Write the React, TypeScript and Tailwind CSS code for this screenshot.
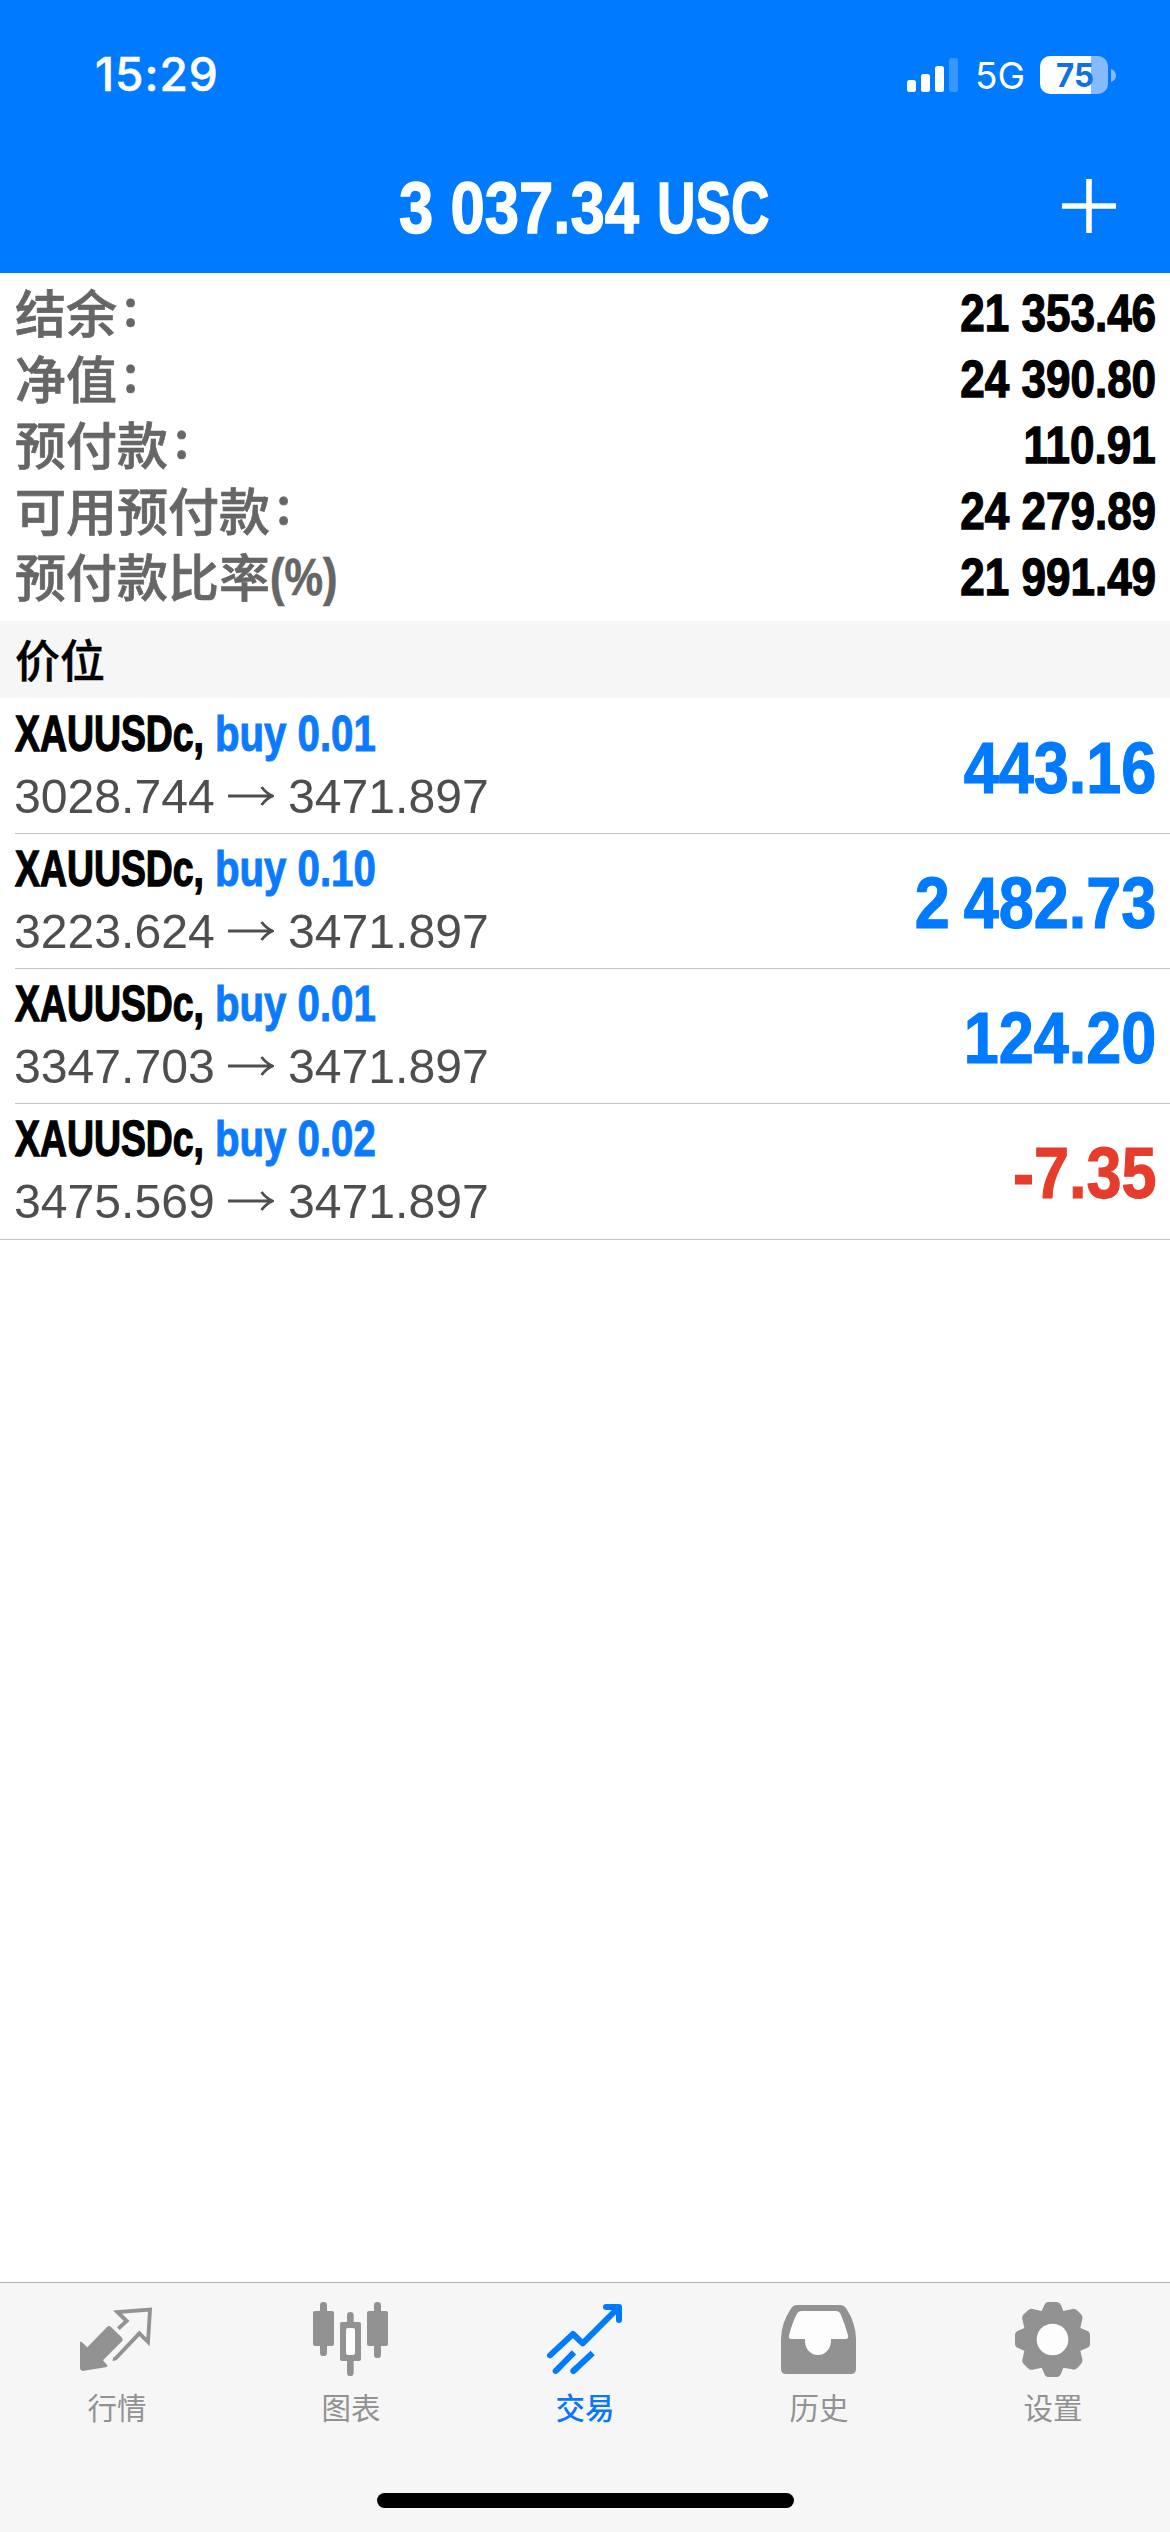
import type { ReactNode } from "react";

const summary = [
  { label: "结余", colon: true, value: "21 353.46" },
  { label: "净值", colon: true, value: "24 390.80" },
  { label: "预付款", colon: true, value: "110.91" },
  { label: "可用预付款", colon: true, value: "24 279.89" },
  { label: "预付款比率", colon: false, value: "21 991.49" },
];

const positions = [
  { side: "buy 0.01", open: "3028.744", now: "3471.897", profit: "443.16" },
  { side: "buy 0.10", open: "3223.624", now: "3471.897", profit: "2 482.73" },
  { side: "buy 0.01", open: "3347.703", now: "3471.897", profit: "124.20" },
  { side: "buy 0.02", open: "3475.569", now: "3471.897", profit: "-7.35" },
];

function StatusBar() {
  return (
    <div className="flex h-[142px] items-start justify-between pl-[95px] pr-[54px] font-['Inter',sans-serif] text-white">
      <span className="mt-[47px] h-[54px] text-[46px] leading-[54px] font-medium tracking-[1px] whitespace-nowrap [-webkit-text-stroke:0.5px_white]">15:29</span>
      <div className="mt-[48px] flex h-[54px] items-center">
        <svg className="mr-[17px] h-[34px] w-[51px]" viewBox="0 0 51 34" fill="currentColor">
          <rect x="0" y="22" width="9" height="12" rx="2.5" />
          <rect x="14" y="16" width="9" height="18" rx="2.5" />
          <rect x="28" y="8" width="9" height="26" rx="2.5" />
          <rect x="42" y="0" width="9" height="34" rx="2.5" opacity="0.22" />
        </svg>
        <span className="mt-[2px] w-[65px] text-[37px] leading-[54px] whitespace-nowrap">5G</span>
        <div className="flex h-[38px] w-[68px] items-center rounded-[10px] bg-linear-to-r from-white from-75% to-[#85bbfb] to-75%">
          <span className="w-full pl-[1px] text-center text-[33px] leading-[38px] font-bold text-[#0f72e0]">
            <span className="inline-block scale-x-[0.95]">75</span>
          </span>
        </div>
        <svg className="ml-[3px] h-[13px] w-[5px]" viewBox="0 0 5 13">
          <path d="M0 0C3 1 5 3.5 5 6.5S3 12 0 13Z" fill="#85bbfb" />
        </svg>
      </div>
    </div>
  );
}

function NavBar() {
  return (
    <div className="grid h-[131px] grid-cols-[399px_1fr_108px] items-center text-white">
      <span />
      <h1 className="flex text-[73px] leading-[80px] font-bold whitespace-nowrap [-webkit-text-stroke:1.4px_white]">
        <span className="w-[258px]">
          <span className="inline-block origin-left scale-x-[0.845]">3 037.34</span>
        </span>
        <span>
          <span className="inline-block origin-left scale-x-[0.73]">USC</span>
        </span>
      </h1>
      <svg className="-mt-[3px] h-[54px] w-[54px]" viewBox="0 0 54 54" fill="currentColor">
        <path d="M24.2 0h5.6v24.2H54v5.6H29.800V54h-5.6V29.800H0v-5.6h24.200Z" />
      </svg>
    </div>
  );
}

function Summary() {
  return (
    <section className="h-[348px] pt-[7px]">
      {summary.map((row) => (
        <div key={row.label} className="flex h-[66px] items-center justify-between pr-[14px] pl-[15px]">
          <div className="-mt-[5px] flex h-[66px] font-['Noto_Sans_CJK_SC',sans-serif] text-[51px] leading-[66px] font-medium text-[#666] [-webkit-text-stroke:0.7px_#666]">
            <span>{row.label}</span>
            {row.colon ? (
              <span className="-mt-[7px] ml-[6px]">:</span>
            ) : (
              <span className="mt-[3px] inline-block origin-left scale-x-[0.85] font-['Liberation_Sans',sans-serif] font-bold">(%)</span>
            )}
          </div>
          <span className="origin-right scale-x-[0.855] text-[51.5px] leading-[66px] font-bold whitespace-nowrap text-black [-webkit-text-stroke:1.3px_black]">
            {row.value}
          </span>
        </div>
      ))}
    </section>
  );
}

function Positions() {
  return (
    <ul className="pt-px">
      {positions.map((p) => (
        <li key={p.open} className="last:border-b last:border-[#c4c4c7]">
          <div className="ml-[15px] flex h-[135px] justify-between border-b border-[#c4c4c7] pr-[14px] in-[li:last-child]:border-0">
            <div className="pt-[5px]">
              <div className="flex h-[59px] text-[49.3px] leading-[60px] font-bold whitespace-nowrap">
                <span className="w-[200px] text-black [-webkit-text-stroke:1.3px_black]">
                  <span className="inline-block origin-left scale-x-[0.758]">XAUUSDc,</span>
                </span>
                <span className="text-[#0a7aff] [-webkit-text-stroke:1px_#0a7aff]">
                  <span className="inline-block origin-left scale-x-[0.815]">{p.side}</span>
                </span>
              </div>
              <div className="flex h-[66px] items-center text-[49px] leading-[66px] text-[#4e4e51]">
                <span className="-ml-px w-[214px]">
                  <span className="inline-block origin-left scale-x-[0.982]">{p.open}</span>
                </span>
                <svg className="w-[46px]" viewBox="0 0 46 20" fill="none" stroke="currentColor" strokeWidth="2.800">
                  <path d="M0 10H44M33.500 1C36.500 5 40 8 44.500 10C40 12 36.500 15 33.500 19" />
                </svg>
                <span className="ml-[14px]">
                  <span className="inline-block origin-left scale-x-[0.982]">{p.now}</span>
                </span>
              </div>
            </div>
            <span
              className={`mt-[2px] h-[133px] origin-right scale-x-[0.862] text-[73px] leading-[134px] font-bold whitespace-nowrap [word-spacing:-4px] [-webkit-text-stroke:1.2px_currentColor] ${
                p.profit.startsWith("-") ? "text-[#e63c2c]" : "text-[#007aff]"
              }`}
            >
              {p.profit}
            </span>
          </div>
        </li>
      ))}
    </ul>
  );
}

function Tab({ label, viewBox, active, children }: { label: string; viewBox: string; active?: boolean; children: ReactNode }) {
  return (
    <div className={`flex flex-1 flex-col items-center pt-[15px] ${active ? "text-[#0a78f5]" : "text-[#929292]"}`}>
      <svg className="size-[84px]" viewBox={viewBox} fill="currentColor">
        {children}
      </svg>
      <span className={`mt-[2px] font-['Noto_Sans_CJK_SC',sans-serif] text-[29.5px] leading-[44px] ${active ? "font-medium" : "font-normal"}`}>
        {label}
      </span>
    </div>
  );
}

function TabBar() {
  return (
    <nav className="flex h-[250px] flex-col items-center justify-between border-t border-[#b2b2b2] bg-[#f6f6f6] pb-[24px]">
      <div className="flex w-full">
        <Tab label="行情" viewBox="225 114 252 252">
          <path d="M240 245L245 246L262 262L321 201Q327 195 333 201L366 233Q371 239 366 244L309 301L323 317Q322 321 316 322L248 333Q240 332 240 325Z" />
          <path
            d="M355 206L380 183L352 156L450 149L444 246L418 220L349 293Q345 298 339 296"
            fill="none"
            stroke="currentColor"
            strokeWidth="11.500"
          />
        </Tab>
        <Tab label="图表" viewBox="927 114 252 252">
          <rect x="939" y="153" width="63" height="105" rx="6" />
          <rect x="960" y="126" width="21" height="162" rx="10" />
          <rect x="1101" y="153" width="63" height="105" rx="6" />
          <rect x="1122" y="126" width="21" height="168" rx="10" />
          <rect x="1041" y="156" width="20" height="45" rx="10" />
          <rect x="1041" y="285" width="20" height="63" rx="10" />
          <rect x="1020" y="186" width="63" height="117" rx="6" />
          <rect x="1038" y="204" width="27" height="81" rx="6" fill="#fdfdfd" />
        </Tab>
        <Tab label="交易" viewBox="219 114 252 252" active>
          <g fill="none" stroke="#007aff" strokeWidth="18" strokeLinejoin="round" strokeLinecap="round">
            <path d="M240 286L309 222L338 250L446 142M408 141H447V180" />
            <path d="M257 333L312 277M310 333L368 279" strokeLinecap="butt" />
            <path d="M257 333L266 324M310 333L319 325" />
          </g>
        </Tab>
        <Tab label="历史" viewBox="231 114 252 252">
          <path d="M290 135H422Q432 135 438 144Q468 190 468 237V327Q468 342 453 342H258Q243 342 243 327V237Q243 190 274 144Q280 135 290 135Z" />
          <path
            d="M305 153Q295 153 290 163Q276 190 267 227Q265 237 275 237H315V246C317 271 334 285 354 285S390 271 393 246V237H436Q447 237 444 226Q434 190 422 163Q417 153 407 153Z"
            fill="#fdfdfd"
          />
        </Tab>
        <Tab label="设置" viewBox="933 114 252 252">
          <path d="M1046 126H1069Q1078 126 1083 136L1090 153L1117 147Q1124 145 1131 151L1143 163Q1149 170 1147 177L1141 204L1161 212Q1170 216 1170 225V251Q1170 260 1161 264L1141 272L1147 298Q1149 306 1143 312L1131 325Q1124 331 1117 328L1090 323L1083 341Q1078 351 1069 351H1046Q1037 351 1033 341L1025 323L998 329Q990 331 984 325L971 312Q965 306 967 299L973 272L954 264Q945 260 945 251V225Q945 216 954 212L973 204L967 177Q965 170 971 163L984 151Q990 145 998 147L1025 153L1033 136Q1037 126 1046 126Z" />
          <circle cx="1057.500" cy="238.500" r="47.500" fill="#fdfdfd" />
        </Tab>
      </div>
      <div className="h-[15px] w-[417px] rounded-full bg-black" />
    </nav>
  );
}

export default function App() {
  return (
    <div className="flex h-[2532px] w-[1170px] flex-col overflow-hidden bg-white font-['Liberation_Sans',Arial,sans-serif]">
      <header className="bg-[#007aff]">
        <StatusBar />
        <NavBar />
      </header>
      <Summary />
      <h2 className="h-[77px] bg-[#f6f6f6] pl-[15px] font-['Noto_Sans_CJK_SC',sans-serif] text-[45px] leading-[75px] font-medium text-black [-webkit-text-stroke:0.4px_black]">价位</h2>
      <main className="flex-1">
        <Positions />
      </main>
      <TabBar />
    </div>
  );
}
